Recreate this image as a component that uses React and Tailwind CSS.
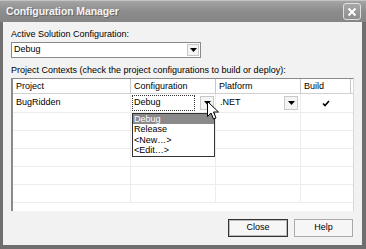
import { useState } from 'react';

const rows = [0, 1, 2, 3, 4, 5];

const Arrow = () => (
  <svg width="7" height="4" viewBox="0 0 7 4" className="block">
    <path d="M0 0h7L3.5 4z" fill="#000" />
  </svg>
);

const DropButton = ({ className = '' }) => (
  <div className={`flex items-center justify-center bg-[#f4f4f4] border border-[#c8c8c8] ${className}`}>
    <Arrow />
  </div>
);

export default function App() {
  const [selected] = useState('Debug');

  return (
    <div className="w-[366px] h-[249px] flex flex-col bg-[#6f6f6f] p-[0_4px_4px_3px] font-['Liberation_Sans',sans-serif] text-[9px] text-black overflow-hidden">
      {/* title bar */}
      <div className="h-[22px] -ml-[3px] -mr-[4px] pl-[6px] pr-[5px] flex items-center justify-between bg-gradient-to-b from-[#a4a4a4] via-[#8c8c8c] to-[#868686] border-t border-[#c4c4c4]">
        <span className="text-[#f4f4f4] font-bold text-[10.5px] tracking-[-0.1px] [text-shadow:1px_1px_0_#666]">
          Configuration Manager
        </span>
        <div className="w-[18px] h-[17px] border border-[#e0e0e0] rounded-[3px] bg-gradient-to-b from-[#a8a8a8] to-[#8e8e8e] flex items-center justify-center">
          <svg width="10" height="10" viewBox="0 0 10 10">
            <path d="M1.5 1.5l7 7M8.5 1.5l-7 7" stroke="#fff" strokeWidth="2" />
          </svg>
        </div>
      </div>

      {/* body */}
      <div className="flex-1 bg-[#f2f2f2] px-[8px] pt-[6px] flex flex-col">
        <div className="h-[12px] leading-[12px]">Active Solution Configuration:</div>
        <div className="mt-[2px] w-[190px] h-[16px] bg-white border border-[#8a8a8a] flex items-center pl-[2px]">
          <span className="flex-1">{selected}</span>
          <DropButton className="w-[12px] h-[12px] mr-[1px]" />
        </div>

        <div className="mt-[6px] h-[12px] leading-[12px]">
          Project Contexts (check the project configurations to build or deploy):
        </div>

        {/* grid */}
        <div className="relative mt-[2px] w-[343px] h-[133px] bg-white border-l-2 border-t border-[#8a8a8a] border-r border-r-[#d8d8d8]">
          <div className="flex h-[15px] border-b border-[#d0d0d0] bg-white">
            <div className="w-[118px] pl-[3px] border-r border-[#c8c8c8] leading-[15px]">Project</div>
            <div className="w-[85px] pl-[3px] border-r border-[#c8c8c8] leading-[15px]">Configuration</div>
            <div className="w-[85px] pl-[3px] border-r border-[#c8c8c8] leading-[15px]">Platform</div>
            <div className="w-[50px] pl-[3px] border-r border-[#c8c8c8] leading-[15px]">Build</div>
          </div>
          {rows.map((r) => (
            <div key={r} className={`flex ${r === 0 ? 'h-[19px]' : 'h-[18px]'} border-b border-[#ececec]`}>
              <div className="w-[118px] pl-[3px] border-r border-[#ececec] flex items-center">
                {r === 0 && 'BugRidden'}
              </div>
              <div className="w-[85px] border-r border-[#ececec] flex items-center pl-[1px] pr-[1px]">
                {r === 0 && (
                  <>
                    <div className="w-[63px] h-[16px] border border-dotted border-[#333] pl-[1px] flex items-center">
                      Debug
                    </div>
                    <DropButton className="ml-auto w-[14px] h-[14px]" />
                  </>
                )}
              </div>
              <div className="w-[85px] border-r border-[#ececec] flex items-center pl-[4px] pr-[2px]">
                {r === 0 && (
                  <>
                    <span className="flex-1">.NET</span>
                    <DropButton className="w-[14px] h-[14px]" />
                  </>
                )}
              </div>
              <div className="w-[50px] flex items-center justify-center">
                {r === 0 && (
                  <svg width="8" height="7" viewBox="0 0 8 7">
                    <path d="M1 3.5l2 2L7 1" stroke="#000" strokeWidth="1.6" fill="none" />
                  </svg>
                )}
              </div>
            </div>
          ))}

          {/* open dropdown list */}
          <div className="absolute left-[119px] top-[34px] w-[83px] bg-white border border-[#333] leading-[10.5px]">
            <div className="bg-[#8a8a8a] text-white pl-[1px] h-[10px]">Debug</div>
            <div className="pl-[1px]">Release</div>
            <div className="pl-[1px]">&lt;New…&gt;</div>
            <div className="pl-[1px]">&lt;Edit…&gt;</div>
          </div>

          {/* mouse pointer */}
          <svg className="absolute left-[194px] top-[22px]" width="12" height="19" viewBox="0 0 12 19">
            <path d="M0.5 0.5v15l3.5-3.5 2.5 6 2.5-1-2.5-6h5z" fill="#fff" stroke="#000" strokeWidth="1" />
          </svg>
        </div>

        <div className="mt-[8px] flex justify-end gap-[6px] pr-[1px]">
          <button className="w-[60px] h-[18px] bg-[#f6f6f6] border border-[#333] outline outline-1 -outline-offset-2 outline-[#bbb]">Close</button>
          <button className="w-[59px] h-[18px] bg-[#f6f6f6] border border-[#aaa]">Help</button>
        </div>
      </div>
    </div>
  );
}
